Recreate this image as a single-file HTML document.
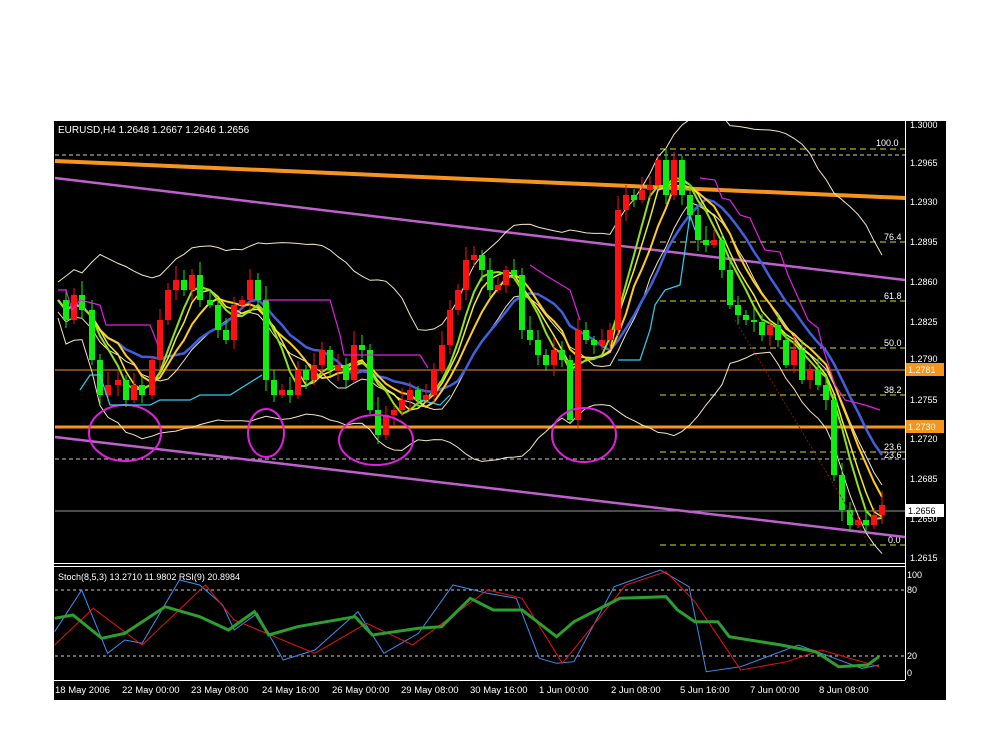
<!DOCTYPE html>
<html><head><meta charset="utf-8"><style>
html,body{margin:0;padding:0;background:#fff;width:1000px;height:750px;overflow:hidden}
svg{display:block}
text{font-family:"Liberation Sans",sans-serif;fill:#fff}
</style></head><body>
<svg id="s" width="1000" height="750" viewBox="0 0 1000 750">
<defs><clipPath id="cp"><rect x="55" y="121" width="850" height="442"/></clipPath></defs>
<rect x="54" y="121" width="892" height="579" fill="#000"/>
<g stroke="#fff" stroke-width="1">
<line x1="905.5" y1="121" x2="905.5" y2="680"/>
<line x1="54" y1="563.5" x2="905" y2="563.5"/>
<line x1="54" y1="566.5" x2="905" y2="566.5"/>
<line x1="54" y1="680.5" x2="905" y2="680.5"/>
</g>
<text x="58" y="133" font-size="10">EURUSD,H4  1.2648 1.2667 1.2646 1.2656</text>
<line x1="55" y1="155" x2="905" y2="155" stroke="#ccc" stroke-dasharray="4,3"/>
<line x1="55" y1="459" x2="905" y2="459" stroke="#ccc" stroke-dasharray="4,3"/>
<g stroke="#dddd33" stroke-dasharray="6,4">
<line x1="660" y1="149" x2="905" y2="149"/><line x1="660" y1="242" x2="905" y2="242"/>
<line x1="660" y1="301" x2="905" y2="301"/><line x1="660" y1="348" x2="905" y2="348"/>
<line x1="660" y1="395" x2="905" y2="395"/><line x1="660" y1="452" x2="905" y2="452"/>
<line x1="660" y1="545" x2="905" y2="545"/>
</g>
<g font-size="9">
<text x="876" y="146">100.0</text><text x="884" y="240">76.4</text><text x="884" y="299">61.8</text>
<text x="884" y="346">50.0</text><text x="884" y="393">38.2</text><text x="884" y="450">23.6</text>
<text x="884" y="458">23.6</text><text x="888" y="543">0.0</text>
</g>
<line x1="55" y1="370" x2="905" y2="370" stroke="#f7941d" stroke-width="1"/>
<line x1="55" y1="427" x2="905" y2="427" stroke="#f7941d" stroke-width="3"/>
<line x1="55" y1="511" x2="905" y2="511" stroke="#999" stroke-width="1"/>
<line x1="55" y1="161" x2="905" y2="198" stroke="#f7941d" stroke-width="4"/>
<line x1="55" y1="178" x2="905" y2="280" stroke="#c060d0" stroke-width="2.5"/>
<line x1="55" y1="437" x2="905" y2="537" stroke="#c060d0" stroke-width="2.5"/>
<g id="ind" clip-path="url(#cp)"></g>
<g id="cnd"></g>
<polyline fill="none" stroke="#8b1010" stroke-dasharray="2,2" points="735,320 870,545"/>
<g fill="none" stroke="#e020e0" stroke-width="2">
<ellipse cx="125" cy="433" rx="36" ry="28"/><ellipse cx="266" cy="433" rx="18" ry="24"/>
<ellipse cx="376" cy="440" rx="37" ry="25"/><ellipse cx="584" cy="435" rx="32" ry="27"/>
</g>
<g fill="none" stroke-width="1.2">
<polyline stroke="#e020e0" points="58,290 66,290 72,310 80,300 100,305 106,325 150,325 158,345"/>
<polyline stroke="#e020e0" points="264,300 330,300 340,335 344,355 420,355 428,368"/>
<polyline stroke="#e020e0" points="530,265 545,275 570,290 580,320"/>
<polyline stroke="#e020e0" points="700,178 715,180 722,198 730,200 740,215 750,218 760,240 765,250 780,252 788,275 800,302 808,320 818,328 822,345 835,385 845,400 865,405 880,410"/>
<polyline stroke="#30d0f0" points="80,390 90,375 100,375 110,405 150,405 160,400 190,400 200,395 230,395 262,375"/>
<polyline stroke="#30d0f0" points="420,400 440,405 450,395"/>
<polyline stroke="#30d0f0" points="618,360 640,360 650,330 655,305 665,290 680,285 690,215 695,230"/>
</g>
<g font-size="9">
<text x="910" y="128">1.3000</text><text x="910" y="166">1.2965</text><text x="910" y="205">1.2930</text>
<text x="910" y="245">1.2895</text><text x="910" y="285">1.2860</text><text x="910" y="325">1.2825</text>
<text x="910" y="362">1.2790</text><text x="910" y="403">1.2755</text><text x="910" y="442">1.2720</text>
<text x="910" y="482">1.2685</text><text x="910" y="522">1.2650</text><text x="910" y="561">1.2615</text>
</g>
<rect x="906" y="363" width="38" height="13" fill="#f7941d"/><text x="908" y="373" font-size="9">1.2781</text>
<rect x="906" y="420" width="38" height="13" fill="#f7941d"/><text x="908" y="430" font-size="9">1.2730</text>
<rect x="906" y="504" width="38" height="13" fill="#fff"/><text x="908" y="514" font-size="9" style="fill:#000">1.2656</text>
<text x="58" y="580" font-size="9">Stoch(8,5,3) 13.2710 11.9802  RSI(9) 20.8984</text>
<line x1="55" y1="590" x2="905" y2="590" stroke="#ccc" stroke-dasharray="3,3"/>
<line x1="55" y1="656" x2="905" y2="656" stroke="#ccc" stroke-dasharray="3,3"/>
<g font-size="9"><text x="907" y="578">100</text><text x="907" y="593">80</text><text x="907" y="659">20</text><text x="907" y="676">0</text></g>
<g id="sub" fill="none"></g>
<g font-size="9.5">
<text x="55" y="693">18 May 2006</text><text x="122" y="693">22 May 00:00</text><text x="191" y="693">23 May 08:00</text>
<text x="262" y="693">24 May 16:00</text><text x="332" y="693">26 May 00:00</text><text x="401" y="693">29 May 08:00</text>
<text x="470" y="693">30 May 16:00</text><text x="539" y="693">1 Jun 00:00</text><text x="611" y="693">2 Jun 08:00</text>
<text x="680" y="693">5 Jun 16:00</text><text x="750" y="693">7 Jun 00:00</text><text x="819" y="693">8 Jun 08:00</text>
</g>
</svg>
<script>
var NS="http://www.w3.org/2000/svg";
function el(p,t,a){var e=document.createElementNS(NS,t);for(var k in a)e.setAttribute(k,a[k]);p.appendChild(e);return e;}
var d=[58,300,66,320,74,295,82,310,92,360,100,395,108,385,118,380,126,400,134,385,142,395,152,360,160,320,168,290,176,280,184,290,192,275,200,300,210,305,218,330,226,340,234,305,242,300,250,280,258,300,266,380,274,395,282,390,290,395,298,370,306,380,314,365,322,350,330,370,338,365,346,380,354,345,362,350,370,410,378,435,386,415,394,410,402,400,410,390,418,400,426,395,434,370,442,345,450,310,458,290,466,260,474,255,482,270,490,290,498,285,506,270,514,275,522,330,530,340,538,355,546,365,554,350,562,360,570,420,578,330,586,340,594,345,602,340,610,330,618,210,626,195,634,200,642,190,650,185,658,160,666,195,674,160,682,195,690,215,698,240,706,245,714,240,722,270,730,305,738,315,746,320,754,322,762,335,770,325,778,340,786,365,794,350,802,380,810,370,818,385,826,400,834,475,842,510,850,525,858,520,866,525,874,515,882,505];
var X=[],C=[];for(var i=0;i<d.length;i+=2){X.push(d[i]);C.push(d[i+1]);}
var cg=document.getElementById("cnd"),ig=document.getElementById("ind");
for(var i=1;i<X.length;i++){var o=C[i-1],c=C[i],up=c<o,col=up?"#ff1010":"#10ee10";
var t=Math.min(o,c),b=Math.max(o,c);var w=((i*7)%11)+4;
el(cg,"line",{x1:X[i],x2:X[i],y1:t-w,y2:b+((i*5)%9)+3,stroke:col});
el(cg,"rect",{x:X[i]-3,y:t,width:6,height:Math.max(b-t,1),fill:col});}
function ma(n){var r=[];for(var i=0;i<C.length;i++){var s=0,k=0;for(var j=Math.max(0,i-n+1);j<=i;j++){s+=C[j];k++;}r.push(s/k);}return r;}
function pl(arr,col,w,off){var p=[];for(var i=0;i<X.length;i++)p.push(X[i]+","+(arr[i]+(off?off[i]:0)).toFixed(1));el(ig,"polyline",{points:p.join(" "),fill:"none",stroke:col,"stroke-width":w});}
var m20=ma(20),sd=[];for(var i=0;i<C.length;i++){var s=0,k=0;for(var j=Math.max(0,i-19);j<=i;j++){s+=(C[j]-m20[i])*(C[j]-m20[i]);k++;}sd.push(1.6*Math.sqrt(s/k)+18);}
var neg=sd.map(function(v){return -v;});
pl(m20,"#f5e6c0",1,neg);pl(m20,"#f5e6c0",1,sd);
var m10=ma(10);pl(m10.map(function(v){return v+12;}),"#f5e6c0",1);
pl(ma(12),"#4060e0",2.5);pl(ma(8),"#ffcc22",2);pl(ma(6),"#eeee22",1.5);pl(ma(5),"#90e020",2);
var sub=document.getElementById("sub");
function sp(a,col,w){var p=[];for(var i=0;i<a.length;i+=2)p.push((50+a[i]/1.737).toFixed(1)+","+(555+a[i+1]/3).toFixed(1));el(sub,"polyline",{points:p.join(" "),stroke:col,"stroke-width":w,fill:"none"});}
sp([8,230,55,105,100,295,130,255,160,265,225,75,260,90,300,150,320,225,360,175,405,315,460,285,535,170,580,295,640,235,700,90,760,115,810,130,850,310,880,325,910,320,980,95,1060,45,1110,95,1140,350,1200,335,1300,270,1340,295,1410,340,1440,330],"#3a8ff0",1);
sp([8,270,75,160,160,270,270,90,320,195,460,295,550,205,630,270,760,105,820,130,890,325,1000,90,1070,50,1120,140,1200,345,1280,320,1340,285,1440,335],"#ee1111",1);
sp([8,190,40,180,90,250,130,235,200,155,260,185,310,225,355,170,380,240,430,215,530,185,560,240,640,220,680,215,730,130,770,165,820,165,880,245,910,200,990,130,1070,125,1090,165,1120,200,1160,200,1180,245,1270,270,1330,290,1370,335,1420,330,1440,305],"#2e9e2e",3);
</script>
</body></html>
